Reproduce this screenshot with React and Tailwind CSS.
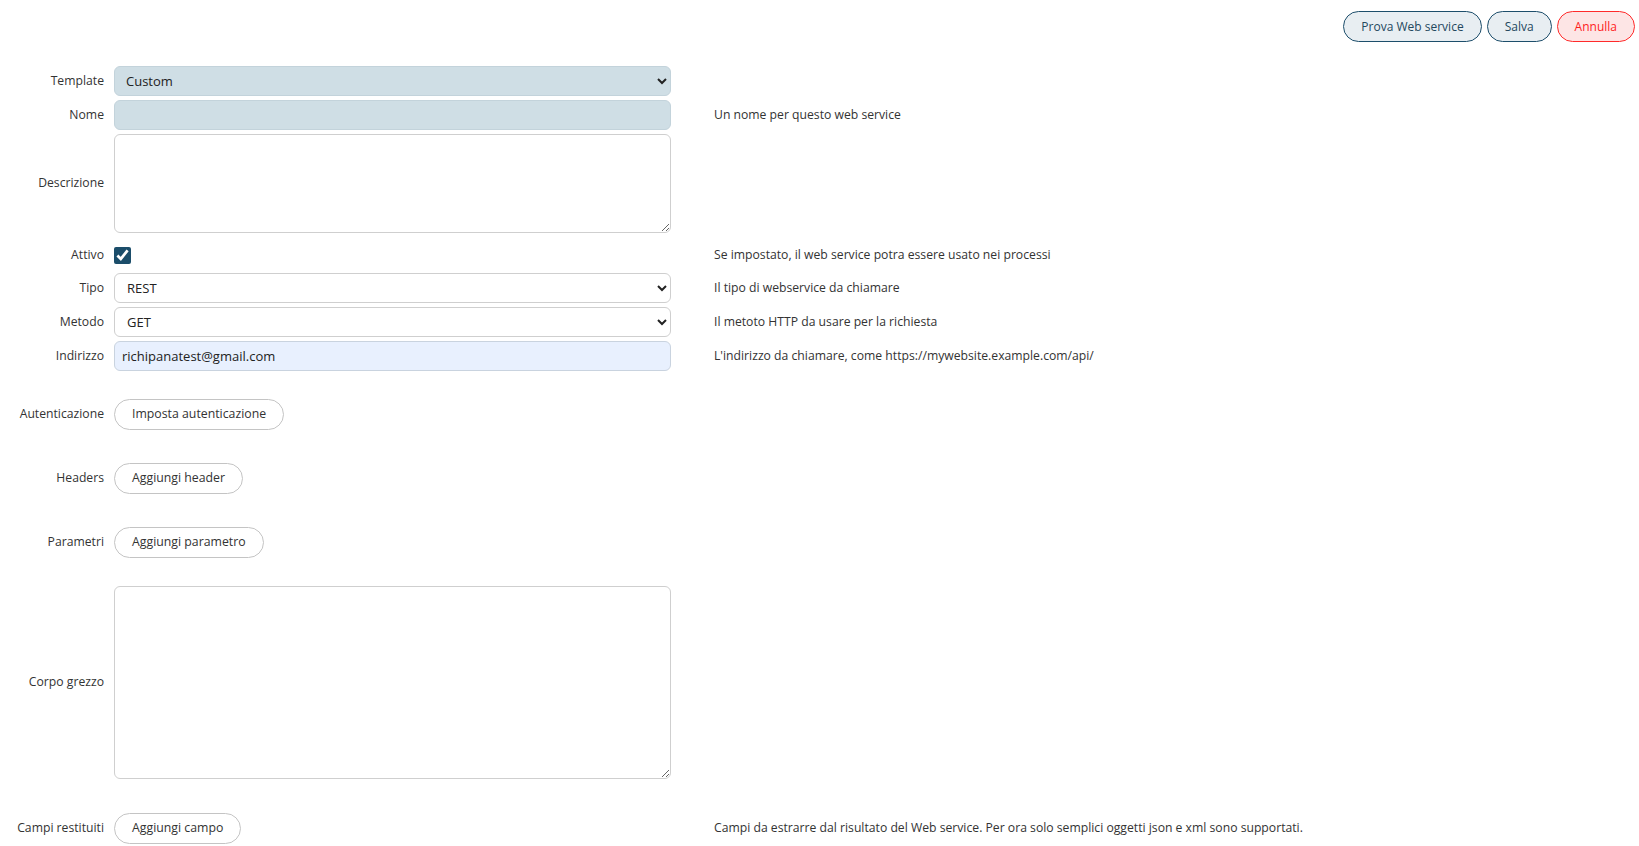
import { useState } from 'react';

const font = { fontFamily: '"Open Sans", "Liberation Sans", sans-serif' };

function Row({ label, hint, className = '', children }) {
  return (
    <div className={`flex items-center ${className}`}>
      <label className="w-[104px] shrink-0 text-right text-[12.2px] text-[#333]">{label}</label>
      <div className="ml-[10px] w-[557px] shrink-0">{children}</div>
      <div className="ml-[43px] text-[12.2px] text-[#333]">{hint}</div>
    </div>
  );
}

function PillButton({ children }) {
  return (
    <button className="h-[31px] rounded-full border border-[#c4c4c4] bg-white px-[17px] text-[12.3px] text-[#333]">
      {children}
    </button>
  );
}

export default function App() {
  const [form, setForm] = useState({
    template: 'Custom',
    nome: '',
    descrizione: '',
    attivo: true,
    tipo: 'REST',
    metodo: 'GET',
    indirizzo: 'richipanatest@gmail.com',
    corpo: '',
  });

  const set = (key) => (e) =>
    setForm((f) => ({ ...f, [key]: e.target.type === 'checkbox' ? e.target.checked : e.target.value }));

  const selectCls =
    'h-[30px] w-full rounded-[6px] border border-[#cfcfcf] bg-white pl-[8px] pr-[4px] text-[13px] text-[#222] outline-none';

  return (
    <div className="min-h-screen bg-white" style={font}>
      {/* action bar */}
      <div className="flex justify-end gap-[5px] pr-[4px] pt-[11px]">
        <button className="h-[31px] rounded-full border border-[#1d4e6b] bg-[#e8eef2] px-[17px] text-[12px] text-[#24485e]">
          Prova Web service
        </button>
        <button className="h-[31px] rounded-full border border-[#1d4e6b] bg-[#e8eef2] px-[17px] text-[12px] text-[#24485e]">
          Salva
        </button>
        <button className="h-[31px] rounded-full border border-[#ff2a2a] bg-[#fde5e5] px-[17px] text-[12px] text-[#ff1c1c]">
          Annulla
        </button>
      </div>

      <div className="mt-[24px] flex flex-col">
        <Row label="Template">
          <select
            value={form.template}
            onChange={set('template')}
            className="h-[30px] w-full rounded-[6px] border border-[#c3d3db] bg-[#cfdee5] pl-[7px] pr-[4px] text-[13px] text-[#222] outline-none"
          >
            <option>Custom</option>
          </select>
        </Row>

        <Row label="Nome" hint="Un nome per questo web service" className="mt-[4px]">
          <input
            value={form.nome}
            onChange={set('nome')}
            className="block h-[30px] w-full rounded-[6px] border border-[#c3d3db] bg-[#cfdee5] px-[7px] text-[13px] outline-none"
          />
        </Row>

        <Row label="Descrizione" className="mt-[4px]">
          <textarea
            value={form.descrizione}
            onChange={set('descrizione')}
            className="block h-[99px] w-full rounded-[6px] border border-[#cfcfcf] bg-white px-[7px] py-[4px] text-[13px] outline-none"
          />
        </Row>

        <Row label="Attivo" hint="Se impostato, il web service potra essere usato nei processi" className="mt-[4px] h-[36px]">
          <input
            type="checkbox"
            checked={form.attivo}
            onChange={set('attivo')}
            className="m-0 block h-[17px] w-[17px] accent-[#1b4d6a]"
          />
        </Row>

        <Row label="Tipo" hint="Il tipo di webservice da chiamare">
          <select value={form.tipo} onChange={set('tipo')} className={selectCls}>
            <option>REST</option>
            <option>SOAP</option>
          </select>
        </Row>

        <Row label="Metodo" hint="Il metoto HTTP da usare per la richiesta" className="mt-[4px]">
          <select value={form.metodo} onChange={set('metodo')} className={selectCls}>
            <option>GET</option>
            <option>POST</option>
            <option>PUT</option>
            <option>DELETE</option>
          </select>
        </Row>

        <Row
          label="Indirizzo"
          hint="L'indirizzo da chiamare, come https://mywebsite.example.com/api/"
          className="mt-[4px]"
        >
          <input
            value={form.indirizzo}
            onChange={set('indirizzo')}
            className="block h-[30px] w-full rounded-[6px] border border-[#c9d3df] bg-[#e8f0fe] px-[7px] text-[13px] text-[#222] outline-none"
          />
        </Row>

        <Row label="Autenticazione" className="mt-[28px]">
          <PillButton>Imposta autenticazione</PillButton>
        </Row>

        <Row label="Headers" className="mt-[33px]">
          <PillButton>Aggiungi header</PillButton>
        </Row>

        <Row label="Parametri" className="mt-[33px]">
          <PillButton>Aggiungi parametro</PillButton>
        </Row>

        <Row label="Corpo grezzo" className="mt-[28px]">
          <textarea
            value={form.corpo}
            onChange={set('corpo')}
            className="block h-[193px] w-full rounded-[6px] border border-[#cfcfcf] bg-white px-[7px] py-[4px] text-[13px] outline-none"
          />
        </Row>

        <Row
          label="Campi restituiti"
          hint="Campi da estrarre dal risultato del Web service. Per ora solo semplici oggetti json e xml sono supportati."
          className="mt-[34px]"
        >
          <PillButton>Aggiungi campo</PillButton>
        </Row>
      </div>
    </div>
  );
}
